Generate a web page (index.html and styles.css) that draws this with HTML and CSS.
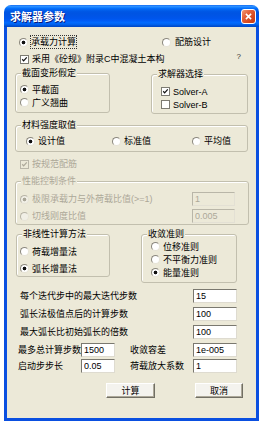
FILE: index.html
```html
<!DOCTYPE html>
<html lang="zh-CN">
<head>
<meta charset="utf-8">
<title>求解器参数</title>
<link rel="stylesheet" href="styles.css">
</head>
<body>
<div class="window">
  <div class="titlebar">
    <span class="title">求解器参数</span>
    <span class="close"><svg viewBox="0 0 15 15" width="15" height="15"><path d="M4.5 4.5 L10.5 10.5 M10.5 4.5 L4.5 10.5" stroke="#fff" stroke-width="1.8" fill="none"/></svg></span>
  </div>
  <div class="client">
    <div class="row r1">
      <label class="opt opt-main"><span class="radio on"></span><span class="focus">承载力计算</span></label>
      <label class="opt"><span class="radio"></span>配筋设计</label>
    </div>
    <div class="row r2">
      <label class="opt"><span class="check"><svg viewBox="0 0 9 9"><path d="M1.6 4.2 L3.4 6.2 L7.4 1.8"/></svg></span>采用《砼规》附录C中混凝土本构</label>
      <span class="help">?</span>
    </div>
    <div class="pair pair-top">
      <div class="group g-sect">
        <span class="legend">截面变形假定</span>
        <label class="opt"><span class="radio on"></span>平截面</label>
        <label class="opt"><span class="radio"></span>广义翘曲</label>
      </div>
      <div class="group g-solver">
        <span class="legend">求解器选择</span>
        <label class="opt"><span class="check"><svg viewBox="0 0 9 9"><path d="M1.6 4.2 L3.4 6.2 L7.4 1.8"/></svg></span>Solver-A</label>
        <label class="opt"><span class="check"></span>Solver-B</label>
      </div>
    </div>
    <div class="group g-mat">
      <span class="legend">材料强度取值</span>
      <div class="tri">
        <label class="opt"><span class="radio on"></span>设计值</label>
        <label class="opt"><span class="radio"></span>标准值</label>
        <label class="opt"><span class="radio"></span>平均值</label>
      </div>
    </div>
    <div class="row r-code">
      <label class="opt dis"><span class="check dis"><svg viewBox="0 0 9 9"><path d="M1.6 4.2 L3.4 6.2 L7.4 1.8"/></svg></span>按规范配筋</label>
    </div>
    <div class="group g-perf dis">
      <span class="legend">性能控制条件</span>
      <div class="perf-row">
        <label class="opt"><span class="radio on dis"></span>极限承载力与外荷载比值(&gt;=1)</label>
        <input class="field" type="text" value="1" disabled>
      </div>
      <div class="perf-row">
        <label class="opt"><span class="radio dis"></span>切线刚度比值</label>
        <input class="field" type="text" value="0.005" disabled>
      </div>
    </div>
    <div class="pair pair-bottom">
      <div class="group g-method">
        <span class="legend">非线性计算方法</span>
        <label class="opt"><span class="radio"></span>荷载增量法</label>
        <label class="opt"><span class="radio on"></span>弧长增量法</label>
      </div>
      <div class="group g-conv">
        <span class="legend">收敛准则</span>
        <label class="opt"><span class="radio"></span>位移准则</label>
        <label class="opt"><span class="radio"></span>不平衡力准则</label>
        <label class="opt"><span class="radio on"></span>能量准则</label>
      </div>
    </div>
    <div class="form">
      <div class="frow">
        <span class="lbl">每个迭代步中的最大迭代步数</span>
        <input class="field" type="text" value="15">
      </div>
      <div class="frow">
        <span class="lbl">弧长法极值点后的计算步数</span>
        <input class="field" type="text" value="100">
      </div>
      <div class="frow">
        <span class="lbl">最大弧长比初始弧长的倍数</span>
        <input class="field" type="text" value="100">
      </div>
      <div class="frow4">
        <span class="lbl">最多总计算步数</span>
        <input class="field" type="text" value="1500">
        <span class="lbl lbl2">收敛容差</span>
        <input class="field" type="text" value="1e-005">
      </div>
      <div class="frow4 last">
        <span class="lbl">启动步步长</span>
        <input class="field" type="text" value="0.05">
        <span class="lbl lbl2">荷载放大系数</span>
        <input class="field" type="text" value="1">
      </div>
    </div>
    <div class="buttons">
      <button class="btn" type="button">计算</button>
      <button class="btn" type="button">取消</button>
    </div>
  </div>
</div>
</body>
</html>
```
FILE: styles.css
```css
html, body {
  margin: 0;
  padding: 0;
  background: #ffffff;
}
body {
  width: 262px;
  height: 424px;
  overflow: hidden;
}
.window {
  margin: 5px 0 0 4px;
  width: 255px;
  display: flex;
  flex-direction: column;
}
.titlebar {
  height: 22px;
  border-radius: 7px 7px 0 0;
  background: linear-gradient(to bottom, #0058ee 0%, #3593ff 4%, #288eff 8%, #127dff 12%, #036ffc 16%, #0262ee 22%, #0057e5 30%, #0054e3 40%, #0055eb 60%, #005bf5 70%, #026afe 80%, #0062ef 88%, #0052d6 94%, #0046c4 100%);
  display: flex;
  align-items: center;
  padding: 0 3px 0 6px;
  box-sizing: border-box;
}
.title {
  font: bold 11px/14px "Noto Sans CJK SC", sans-serif;
  color: #ffffff;
  text-shadow: 1px 1px 0 #0a1c7a;
  flex: 1;
}
.close {
  width: 15px;
  height: 15px;
  box-sizing: border-box;
  border: 1px solid #ffffff;
  border-radius: 3px;
  background: linear-gradient(135deg, #f29a78 0%, #e5623a 35%, #d6481f 70%, #c23a14 100%);
  display: flex;
  align-items: center;
  justify-content: center;
  margin-top: 0px;
}
.close svg {
  display: block;
  width: 13px;
  height: 13px;
}
.client {
  height: 394px;
  box-sizing: border-box;
  background: #ece9d8;
  border: 3px solid #0a4fe0;
  border-top: none;
  padding: 9px 8px 0 8px;
  font: 9px/12px "Liberation Sans", "Noto Sans CJK SC", sans-serif;
  color: #000000;
  display: flex;
  flex-direction: column;
  align-items: flex-start;
}
.row {
  display: flex;
  align-items: center;
  height: 12px;
  width: 100%;
}
.opt {
  display: flex;
  align-items: center;
  gap: 3px;
  height: 12px;
  white-space: nowrap;
}
.r1 .opt-main {
  margin-left: 4px;
  width: 143px;
}
.r1 .opt-main + .opt {
  gap: 4px;
}
.focus {
  outline: 1px dotted #333333;
  outline-offset: 0;
}
.r2 {
  margin-top: 5px;
}
.r2 .opt {
  margin-left: 5px;
}
.help {
  margin-left: auto;
  margin-right: 7px;
  font-size: 8px;
  color: #333333;
  margin-top: -4px;
}
.radio {
  width: 9px;
  height: 9px;
  box-sizing: border-box;
  border-radius: 50%;
  border: 1px solid;
  border-color: #8a877c #e6e3d6 #e6e3d6 #8a877c;
  background: #ffffff;
  flex: none;
}
.radio.on {
  background: radial-gradient(circle, #111111 0 1.5px, #ffffff 2.2px);
}
.radio.dis {
  background: #f1efe6;
  border-color: #b7b4a6 #e6e3d6 #e6e3d6 #b7b4a6;
}
.radio.on.dis {
  background: radial-gradient(circle, #a9a698 0 1.5px, #f1efe6 2.2px);
}
.check {
  width: 9px;
  height: 9px;
  box-sizing: border-box;
  border: 1px solid #7d7b72;
  background: #ffffff;
  flex: none;
  display: block;
}
.check svg {
  display: block;
  width: 7px;
  height: 7px;
}
.check svg path {
  fill: none;
  stroke: #111111;
  stroke-width: 1.6;
}
.check.dis {
  background: #ece9d8;
  border-color: #b9b6a8;
}
.check.dis svg path {
  stroke: #aca899;
}
.dis, .dis .opt, .dis .legend {
  color: #aca899;
}
.group {
  position: relative;
  box-sizing: border-box;
  border: 1px solid #c2bfae;
  border-radius: 3px;
  box-shadow: inset 1px 1px 0 #ffffff;
  display: flex;
  flex-direction: column;
}
.legend {
  position: absolute;
  top: -7px;
  left: 5px;
  padding: 0 1px;
  background: #ece9d8;
  line-height: 12px;
  white-space: nowrap;
}
.pair {
  display: flex;
  align-items: flex-start;
  width: 100%;
}
.pair-top {
  margin-top: 8px;
}
.g-sect {
  width: 95px;
  height: 40px;
  padding: 9px 0 0 4px;
}
.g-sect .opt {
  height: 13px;
}
.g-solver {
  width: 97px;
  height: 40px;
  margin: 1px 0 0 41px;
  padding: 10px 0 0 9px;
}
.g-solver .opt {
  height: 13px;
}
.g-mat {
  margin-top: 11px;
  width: 233px;
  height: 27px;
  padding: 9px 0 0 10px;
}
.tri {
  display: grid;
  grid-template-columns: 86px 80px 1fr;
  height: 12px;
}
.r-code {
  margin-top: 6px;
}
.r-code .opt {
  margin-left: 5px;
}
.g-perf {
  margin-top: 11px;
  width: 234px;
  height: 44px;
  padding: 10px 13px 0 4px;
  gap: 3px;
}
.perf-row {
  display: flex;
  align-items: center;
  height: 14px;
}
.perf-row .field {
  margin-left: auto;
  width: 43px;
}
.pair-bottom {
  margin-top: 9px;
}
.g-method {
  margin-left: 1px;
  width: 94px;
  height: 43px;
  padding: 10px 0 0 3px;
  gap: 4px;
}
.g-method .opt {
  height: 13px;
}
.g-conv {
  margin-left: 31px;
  width: 96px;
  height: 49px;
  padding: 5px 0 0 9px;
}
.g-conv .opt {
  height: 13px;
}
.field {
  box-sizing: border-box;
  height: 14px;
  margin: 0;
  padding: 0 2px;
  border: 1px solid;
  border-color: #7a786f #dedbd0 #dedbd0 #7a786f;
  background: #ffffff;
  font: 9px/12px "Liberation Sans", sans-serif;
  color: #000000;
  outline: none;
  border-radius: 0;
}
.field:disabled {
  background: #ece9d8;
  color: #aca899;
  border-color: #b9b6a8 #e3e0d4 #e3e0d4 #b9b6a8;
}
.form {
  margin-top: 5px;
  width: 100%;
  display: flex;
  flex-direction: column;
  gap: 4px;
}
.frow {
  display: grid;
  grid-template-columns: 1fr 44px;
  align-items: center;
  height: 14px;
  padding: 0 11px 0 5px;
}
.frow:first-child {
  height: 15px;
}
.frow .field, .frow4 .field {
  width: 100%;
}
.frow4 {
  display: grid;
  grid-template-columns: 63px 34px 1fr 44px;
  align-items: center;
  height: 14px;
  padding: 0 11px 0 3px;
}
.frow4.last {
  margin-top: -2px;
}
.lbl {
  white-space: nowrap;
}
.lbl2 {
  padding-left: 15px;
}
.buttons {
  margin-top: 10px;
  display: flex;
  gap: 40px;
  padding-left: 91px;
}
.btn {
  box-sizing: border-box;
  width: 49px;
  height: 15px;
  margin: 0;
  padding: 0;
  border: 1px solid;
  border-color: #ffffff #716f64 #716f64 #ffffff;
  box-shadow: inset -1px -1px 0 #aca899;
  background: #f4f3ee;
  font: 9px/12px "Noto Sans CJK SC", sans-serif;
  color: #000000;
}
.btn + .btn {
  width: 48px;
}
```
